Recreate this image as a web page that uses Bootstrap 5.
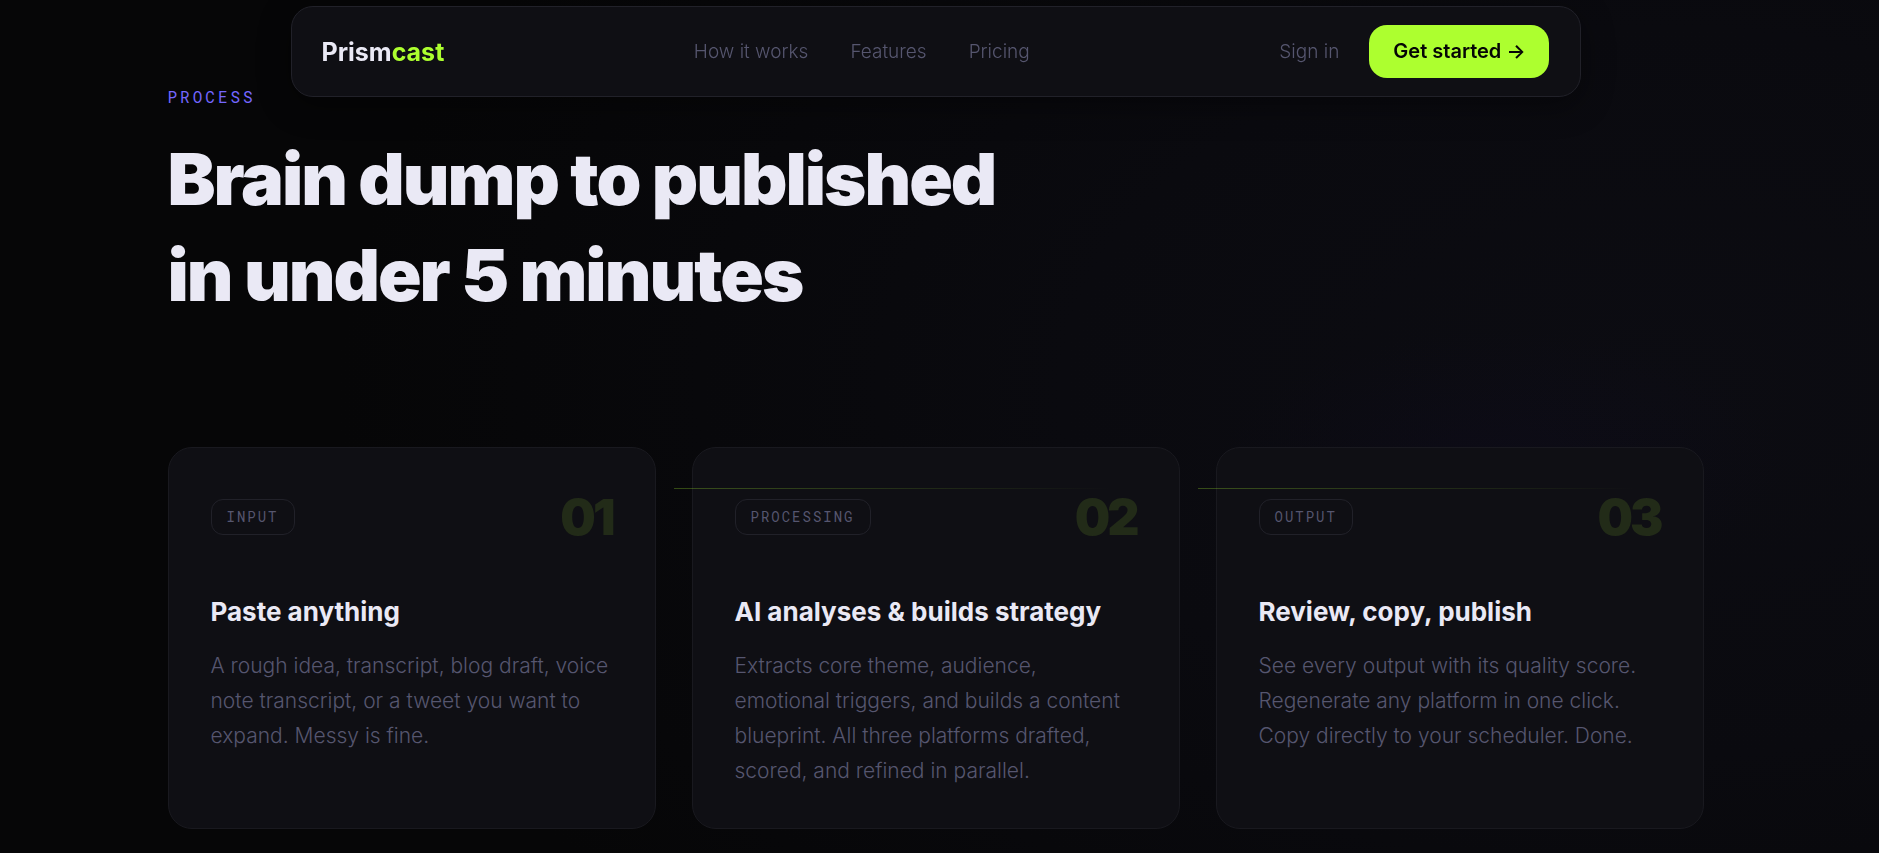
<!DOCTYPE html>
<html lang="en" data-bs-theme="dark">
<head>
<meta charset="utf-8">
<meta name="viewport" content="width=device-width, initial-scale=1">
<title>Prismcast</title>
<link href="https://cdn.jsdelivr.net/npm/bootstrap@5.3.0/dist/css/bootstrap.min.css" rel="stylesheet">
<style>
  :root {
    --ink: #eae9f5;
    --muted: #56566f;
    --lime: #adff2f;
    --violet: #7466ff;
    --panel: #0f0f14;
    --rail: 8px;
  }
  body {
    min-height: 100vh;
    padding-right: var(--rail);
    color: var(--ink);
    font-family: Inter, sans-serif;
    background:
      radial-gradient(ellipse 280px 130px at 80% 54%, rgba(18, 12, 46, .18), transparent),
      radial-gradient(ellipse 70% 95% at 88% 46%, #0c0c12 0%, #0a0a0f 45%, transparent 100%),
      #060607;
  }
  .site-bar { padding: 6px 12px 0; right: var(--rail); }
  .site-bar-panel {
    max-width: 1290px;
    padding: 18px 30px;
    background: var(--panel);
    border: 1px solid #212129;
    border-radius: 22px;
    box-shadow: 0 8px 32px rgba(0, 0, 0, .4);
  }
  .wordmark { font-size: 25px; line-height: 36px; font-weight: 700; color: var(--ink); text-decoration: none; }
  .wordmark span { color: var(--lime); }
  .bar-links { gap: 12px 42px; }
  .bar-links a, .sign-in { font-size: 19px; line-height: 28px; font-weight: 300; color: var(--muted); text-decoration: none; }
  .bar-actions { gap: 30px; }
  .btn-lime {
    --bs-btn-color: #050506;
    --bs-btn-bg: var(--lime);
    --bs-btn-border-width: 0;
    --bs-btn-hover-color: #050506;
    --bs-btn-hover-bg: #bcff57;
    --bs-btn-padding-x: 24px;
    --bs-btn-padding-y: 12px;
    --bs-btn-font-size: 20px;
    --bs-btn-font-weight: 600;
    --bs-btn-border-radius: 18px;
    line-height: 29px;
  }
  .page { max-width: 1560px; padding: 85px 12px 24px; }
  .mono { font-family: "Roboto Mono", "Liberation Mono", monospace; text-transform: uppercase; }
  .kicker { font-size: 16px; line-height: 24px; letter-spacing: 3px; color: var(--violet); margin-bottom: 22px; }
  .headline { font-size: 72px; line-height: 96px; font-weight: 900; letter-spacing: -2px; color: var(--ink); margin-bottom: 124px; }
  .steps { display: grid; grid-template-columns: repeat(auto-fit, minmax(360px, 1fr)); gap: 36px; }
  .step {
    position: relative;
    padding: 40px 42px;
    background: var(--panel);
    border: 1px solid #19191f;
    border-radius: 24px;
  }
  .step + .step::before {
    content: "";
    position: absolute;
    top: 40px;
    left: -19px;
    width: 100%;
    height: 1px;
    background: linear-gradient(90deg, rgba(173, 255, 47, .27), transparent 90%);
  }
  .step-head { height: 58px; margin-bottom: 48px; }
  .step-tag {
    padding: 7px 15px;
    font-size: 14px;
    line-height: 20px;
    letter-spacing: 2px;
    color: var(--muted);
    border: 1px solid #212129;
    border-radius: 12px;
  }
  .step-num { font-size: 50px; line-height: 56px; font-weight: 900; letter-spacing: -3px; color: #222b18; }
  .step h3 { font-size: 26px; line-height: 36px; font-weight: 700; color: var(--ink); margin-bottom: 18px; }
  .step p { font-size: 21px; line-height: 35px; font-weight: 300; color: var(--muted); margin: 0; }
</style>
</head>
<body>

<header class="site-bar fixed-top">
  <nav class="site-bar-panel mx-auto d-flex flex-wrap align-items-center justify-content-between gap-3">
    <a class="wordmark" href="#">Prism<span>cast</span></a>
    <div class="bar-links d-flex flex-wrap">
      <a href="#process">How it works</a>
      <a href="#features">Features</a>
      <a href="#pricing">Pricing</a>
    </div>
    <div class="bar-actions d-flex align-items-center">
      <a class="sign-in" href="#signin">Sign in</a>
      <button type="button" class="btn btn-lime">Get started →</button>
    </div>
  </nav>
</header>

<main class="page mx-auto" id="process">
  <p class="kicker mono">Process</p>
  <h2 class="headline">Brain dump to published<br>in under 5 minutes</h2>

  <div class="steps">
    <article class="step">
      <div class="step-head d-flex align-items-center justify-content-between">
        <span class="step-tag mono">Input</span>
        <span class="step-num">01</span>
      </div>
      <h3>Paste anything</h3>
      <p>A rough idea, transcript, blog draft, voice note transcript, or a tweet you want to expand. Messy is fine.</p>
    </article>
    <article class="step">
      <div class="step-head d-flex align-items-center justify-content-between">
        <span class="step-tag mono">Processing</span>
        <span class="step-num">02</span>
      </div>
      <h3>AI analyses &amp; builds strategy</h3>
      <p>Extracts core theme, audience, emotional triggers, and builds a content blueprint. All three platforms drafted, scored, and refined in parallel.</p>
    </article>
    <article class="step">
      <div class="step-head d-flex align-items-center justify-content-between">
        <span class="step-tag mono">Output</span>
        <span class="step-num">03</span>
      </div>
      <h3>Review, copy, publish</h3>
      <p>See every output with its quality score. Regenerate any platform in one click. Copy directly to your scheduler. Done.</p>
    </article>
  </div>
</main>

<script src="https://cdn.jsdelivr.net/npm/bootstrap@5.3.0/dist/js/bootstrap.bundle.min.js"></script>
</body>
</html>
